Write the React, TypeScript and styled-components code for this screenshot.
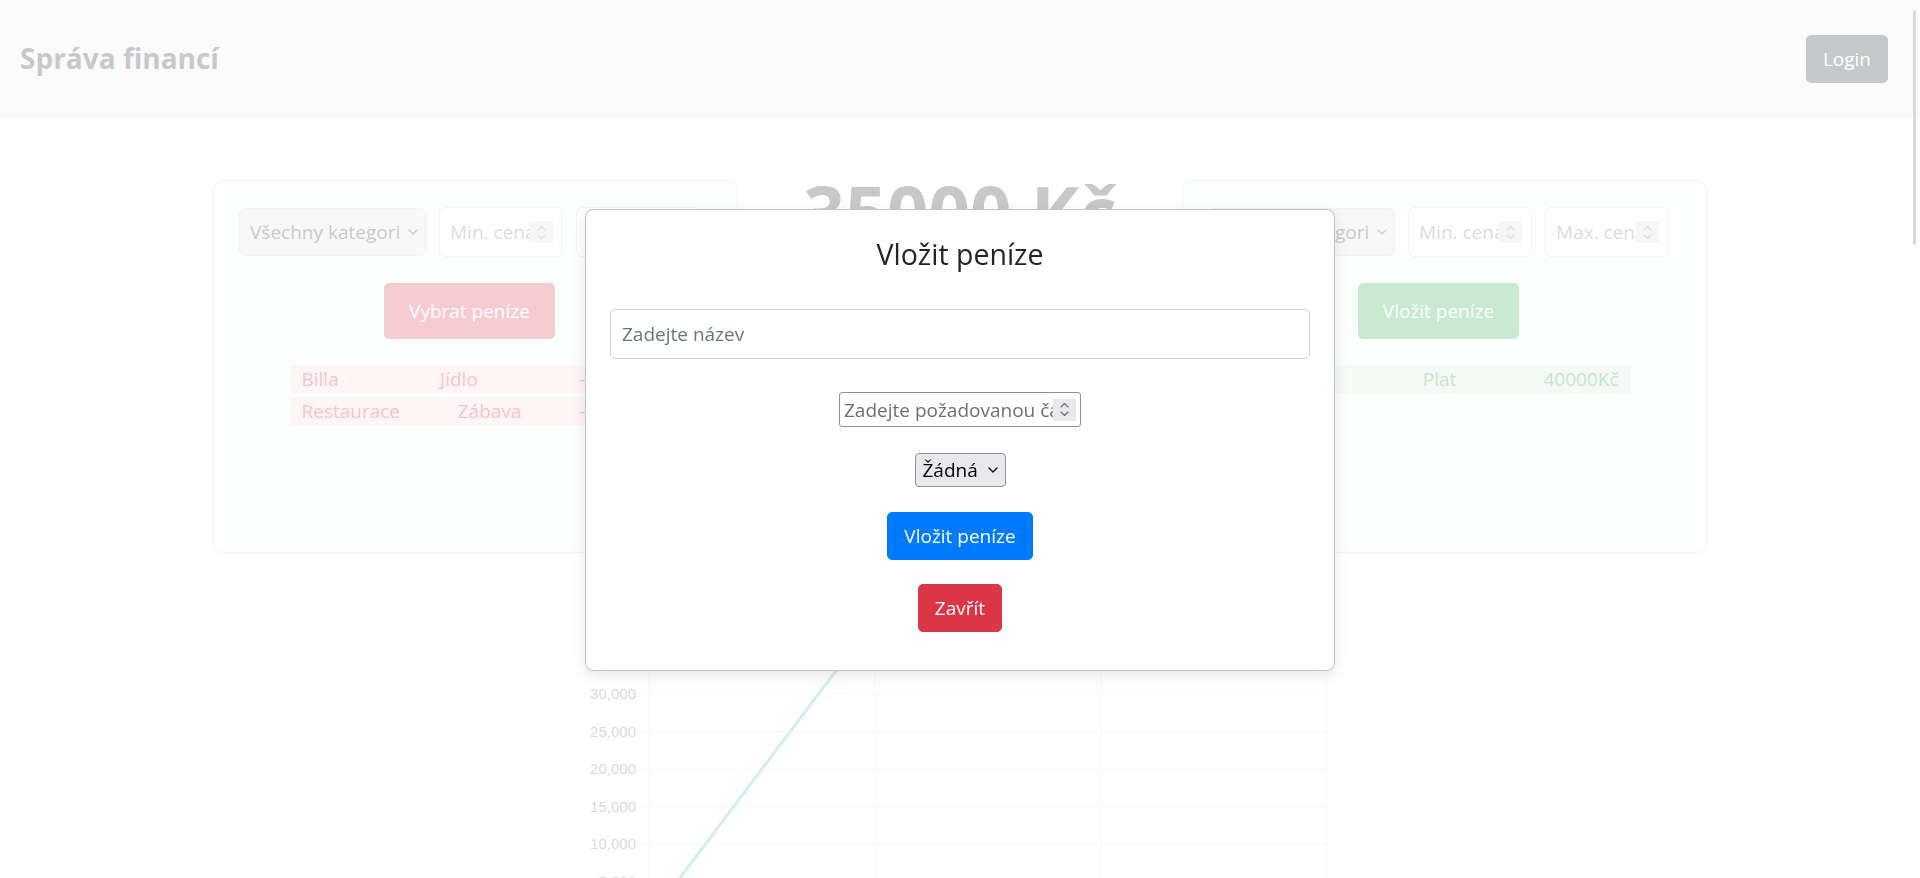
import React from "react";
import styled, { createGlobalStyle } from "styled-components";

const GlobalStyle = createGlobalStyle`
  html, body {
    margin: 0;
    padding: 0;
    overflow: hidden;
    background: #ffffff;
  }
  body {
    font-family: "Open Sans", "Noto Sans", sans-serif;
    color: #212529;
  }
  *, *::before, *::after { box-sizing: border-box; }
  input[type="number"]::-webkit-inner-spin-button,
  input[type="number"]::-webkit-outer-spin-button {
    -webkit-appearance: none;
    margin: 0;
  }
  input[type="number"] { -moz-appearance: textfield; }
`;

/* ---------- navbar ---------- */
const Navbar = styled.nav`
  height: 118px;
  background: #eeeff0;
  display: flex;
  align-items: center;
  justify-content: space-between;
  padding: 0 32px 0 20px;
`;

const Brand = styled.div`
  font-size: 28px;
  font-weight: 700;
  color: #212529;
  line-height: 1.2;
`;

const Button = styled.button<{ $color: string; $pad: string }>`
  font-family: "Open Sans", "Noto Sans", sans-serif;
  font-size: 19px;
  line-height: 30px;
  padding: ${(p) => p.$pad};
  color: #ffffff;
  background: ${(p) => p.$color};
  border: 1px solid ${(p) => p.$color};
  border-radius: 5px;
  cursor: pointer;
  white-space: nowrap;
`;

/* ---------- page ---------- */
const Main = styled.main`
  padding-top: 54px;
`;

const TopRow = styled.div`
  width: 1494px;
  margin: 0 auto;
  display: grid;
  grid-template-columns: 525px 1fr 525px;
  align-items: start;
`;

const Card = styled.section`
  margin-top: 8px;
  height: 373px;
  background: #f8f9fa;
  border: 1px solid #d5d9dd;
  border-radius: 10px;
  box-shadow: 0 2px 6px rgba(0, 0, 0, 0.05);
  padding: 26px 25px;
`;

const FilterRow = styled.div`
  display: flex;
  align-items: center;
  gap: 13px;
  width: 461px;
`;

const SelectWrap = styled.div`
  position: relative;
  display: inline-flex;
`;

const CategorySelect = styled.select`
  appearance: none;
  -webkit-appearance: none;
  width: 187px;
  height: 48px;
  padding: 0 24px 0 10px;
  font-family: "Open Sans", "Noto Sans", sans-serif;
  font-size: 19px;
  color: #212529;
  background: #e3e3e5;
  border: 1px solid #c9cbcf;
  border-radius: 6px;
  outline: none;
`;

const Chevron = styled.svg<{ $right: number }>`
  position: absolute;
  right: ${(p) => p.$right}px;
  top: 50%;
  margin-top: -3px;
  pointer-events: none;
`;

const NumberWrap = styled.div<{ $w: number; $h: number }>`
  position: relative;
  width: ${(p) => p.$w}px;
  height: ${(p) => p.$h}px;
  flex: none;
`;

const PriceInput = styled.input`
  width: 100%;
  height: 100%;
  padding: 0 4px 0 10px;
  font-family: "Open Sans", "Noto Sans", sans-serif;
  font-size: 19px;
  color: #212529;
  background: #ffffff;
  border: 1px solid #ced4da;
  border-radius: 6px;
  outline: none;
  &::placeholder { color: #6c757d; }
`;

const Spinner = styled.span<{ $right: number; $tone: string }>`
  position: absolute;
  right: ${(p) => p.$right}px;
  top: 50%;
  margin-top: -11px;
  width: 23px;
  height: 22px;
  background: ${(p) => p.$tone};
  display: flex;
  align-items: center;
  justify-content: center;
  pointer-events: none;
`;

const ButtonRow = styled.div`
  width: 461px;
  display: flex;
  justify-content: center;
  margin-top: 26px;
`;

const List = styled.ul`
  list-style: none;
  width: 372px;
  margin: 26px auto 0;
  padding: 0;
  display: flex;
  flex-direction: column;
  gap: 4px;
`;

const ListRow = styled.li<{ $kind: "out" | "in" }>`
  height: 28px;
  padding: 0 12px;
  display: flex;
  align-items: center;
  justify-content: space-between;
  font-size: 19px;
  line-height: 28px;
  background: ${(p) => (p.$kind === "out" ? "#f8d7da" : "#d4edda")};
  color: ${(p) => (p.$kind === "out" ? "#ff0000" : "#1f8a36")};
`;

const Center = styled.div`
  display: flex;
  justify-content: center;
`;

const Balance = styled.h1`
  margin: 0;
  font-size: 73px;
  font-weight: 700;
  line-height: 1.1;
  color: #212529;
  white-space: nowrap;
`;

const ChartBox = styled.div`
  width: 750px;
  height: 400px;
  margin: 10px auto 0;
`;

/* ---------- modal ---------- */
const Backdrop = styled.div`
  position: fixed;
  inset: 0;
  background: rgba(255, 255, 255, 0.75);
  z-index: 10;
`;

const ModalLayer = styled.div`
  position: fixed;
  inset: 0;
  z-index: 20;
  display: flex;
  justify-content: center;
  align-items: flex-start;
  padding-top: 209px;
`;

const Modal = styled.div`
  width: 750px;
  background: #ffffff;
  border: 1px solid rgba(0, 0, 0, 0.22);
  border-radius: 8px;
  box-shadow: 0 4px 14px rgba(0, 0, 0, 0.1);
  padding: 27px 24px 38px;
  display: flex;
  flex-direction: column;
  align-items: center;
`;

const ModalTitle = styled.h2`
  margin: 0;
  font-size: 28.5px;
  font-weight: 400;
  line-height: 1.2;
  color: #212529;
`;

const NameInput = styled.input`
  margin-top: 38px;
  width: 100%;
  height: 50px;
  padding: 0 11px;
  font-family: "Open Sans", "Noto Sans", sans-serif;
  font-size: 19px;
  color: #212529;
  border: 1px solid #ced4da;
  border-radius: 5px;
  outline: none;
  &::placeholder { color: #6c757d; }
`;

const Spaced = styled.div<{ $mt: number }>`
  margin-top: ${(p) => p.$mt}px;
  display: flex;
  justify-content: center;
`;

const AmountInput = styled.input`
  width: 100%;
  height: 100%;
  padding: 0 4px;
  font-family: "Open Sans", "Noto Sans", sans-serif;
  font-size: 19px;
  color: #000;
  background: #fff;
  border: 1px solid #8f8f9d;
  border-radius: 3px;
  outline: none;
  &::placeholder { color: #6f6f6f; }
`;

const PlainSelect = styled.select`
  appearance: none;
  -webkit-appearance: none;
  width: 91px;
  height: 34px;
  padding: 0 20px 0 7px;
  font-family: "Open Sans", "Noto Sans", sans-serif;
  font-size: 19px;
  color: #000;
  background: #e9e9ed;
  border: 1px solid #8f8f9d;
  border-radius: 4px;
  outline: none;
`;

const ScrollThumb = styled.div`
  position: fixed;
  right: 4px;
  top: 10px;
  width: 3px;
  height: 235px;
  border-radius: 2px;
  background: #dadada;
  z-index: 30;
`;

/* ---------- pieces ---------- */
const ChevronDown = ({ right, color }: { right: number; color: string }) => (
  <Chevron $right={right} width="10" height="6" viewBox="0 0 10 6">
    <path d="M1 1l4 4 4-4" fill="none" stroke={color} strokeWidth="1.4" strokeLinecap="round" strokeLinejoin="round" />
  </Chevron>
);

const SpinGlyph = ({ color }: { color: string }) => (
  <svg width="11" height="17" viewBox="0 0 11 17">
    <path d="M2 6l3.5-3.5L9 6" fill="none" stroke={color} strokeWidth="1.1" strokeLinecap="round" strokeLinejoin="round" />
    <path d="M2 11l3.5 3.5L9 11" fill="none" stroke={color} strokeWidth="1.1" strokeLinecap="round" strokeLinejoin="round" />
  </svg>
);

const PriceField = ({ placeholder }: { placeholder: string }) => (
  <NumberWrap $w={124} $h={50}>
    <PriceInput type="number" placeholder={placeholder} />
    <Spinner $right={10} $tone="#dadadd">
      <SpinGlyph color="#777" />
    </Spinner>
  </NumberWrap>
);

type Tx = { name: string; category: string; amount: string };

const FinanceCard = ({
  buttonLabel,
  buttonColor,
  kind,
  rows,
}: {
  buttonLabel: string;
  buttonColor: string;
  kind: "out" | "in";
  rows: Tx[];
}) => (
  <Card>
    <FilterRow>
      <SelectWrap>
        <CategorySelect defaultValue="all">
          <option value="all">Všechny kategorie</option>
        </CategorySelect>
        <ChevronDown right={8} color="#333" />
      </SelectWrap>
      <PriceField placeholder="Min. cena" />
      <PriceField placeholder="Max. cena" />
    </FilterRow>
    <ButtonRow>
      <Button $color={buttonColor} $pad="12px 24px">
        {buttonLabel}
      </Button>
    </ButtonRow>
    <List>
      {rows.map((r) => (
        <ListRow key={r.name} $kind={kind}>
          <span>{r.name}</span>
          <span>{r.category}</span>
          <span>{r.amount}</span>
        </ListRow>
      ))}
    </List>
  </Card>
);

const ticks = [0, 5000, 10000, 15000, 20000, 25000, 30000, 35000, 40000];
const yOf = (v: number) => 356 - v * 0.0075;
const xs = [64, 290, 516, 741];
const data = [0, 40000, 37000, 35000];

const BalanceChart = () => (
  <ChartBox>
    <svg width="750" height="400" viewBox="0 0 750 400">
      {xs.map((x) => (
        <line key={x} x1={x} x2={x} y1={yOf(40000)} y2={365} stroke="#e2e2e2" strokeWidth="1" />
      ))}
      {ticks.map((t) => (
        <g key={t}>
          <line x1={55} x2={741} y1={yOf(t)} y2={yOf(t)} stroke="#e2e2e2" strokeWidth="1" />
          <text
            x={51}
            y={yOf(t) + 5}
            textAnchor="end"
            fontFamily="'Liberation Sans', Arial, sans-serif"
            fontSize="15"
            fill="#666"
          >
            {t.toLocaleString("en-US")}
          </text>
        </g>
      ))}
      <polyline
        points={data.map((v, i) => `${xs[i]},${yOf(v)}`).join(" ")}
        fill="none"
        stroke="#4bc0c0"
        strokeWidth="3"
      />
    </svg>
  </ChartBox>
);

export default function App() {
  return (
    <>
      <GlobalStyle />
      <Navbar>
        <Brand>Správa financí</Brand>
        <Button $color="#212529" $pad="8px 16px">
          Login
        </Button>
      </Navbar>
      <Main>
        <TopRow>
          <FinanceCard
            buttonLabel="Vybrat peníze"
            buttonColor="#dc3545"
            kind="out"
            rows={[
              { name: "Billa", category: "Jídlo", amount: "-3000Kč" },
              { name: "Restaurace", category: "Zábava", amount: "-2000Kč" },
            ]}
          />
          <Center>
            <Balance>35000 Kč</Balance>
          </Center>
          <FinanceCard
            buttonLabel="Vložit peníze"
            buttonColor="#28a745"
            kind="in"
            rows={[{ name: "Výplata", category: "Plat", amount: "40000Kč" }]}
          />
        </TopRow>
        <BalanceChart />
      </Main>

      <Backdrop />
      <ModalLayer>
        <Modal>
          <ModalTitle>Vložit peníze</ModalTitle>
          <NameInput type="text" placeholder="Zadejte název" />
          <Spaced $mt={33}>
            <NumberWrap $w={242} $h={35}>
              <AmountInput type="number" placeholder="Zadejte požadovanou částku" />
              <Spinner $right={5} $tone="#e9e9ed">
                <SpinGlyph color="#6a6a6a" />
              </Spinner>
            </NumberWrap>
          </Spaced>
          <Spaced $mt={26}>
            <SelectWrap>
              <PlainSelect defaultValue="none">
                <option value="none">Žádná</option>
              </PlainSelect>
              <ChevronDown right={8} color="#111" />
            </SelectWrap>
          </Spaced>
          <Spaced $mt={25}>
            <Button $color="#007bff" $pad="8px 16px">
              Vložit peníze
            </Button>
          </Spaced>
          <Spaced $mt={24}>
            <Button $color="#dc3545" $pad="8px 16px">
              Zavřít
            </Button>
          </Spaced>
        </Modal>
      </ModalLayer>
      <ScrollThumb />
    </>
  );
}
